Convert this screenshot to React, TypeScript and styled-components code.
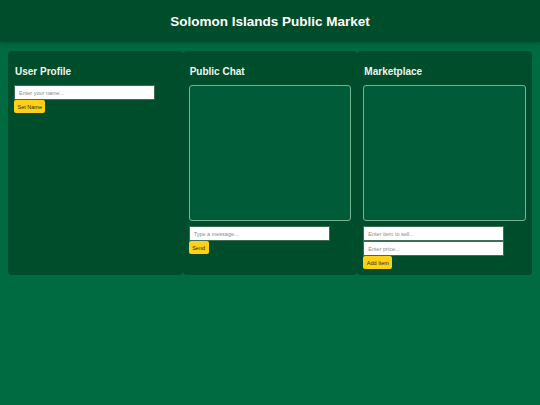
import React, { useState } from 'react';
import styled, { createGlobalStyle } from 'styled-components';

const GlobalStyle = createGlobalStyle`
    html, body {
        margin          : 0;
        padding         : 0;
        background      : #006a40;
        font-family     : "Liberation Sans", Arial, sans-serif;
    }
    `

const Header = styled.header`
    height          : 42px;
    background      : #004d2b;
    color           : #ffffff;
    display         : flex;
    justify-content : center;
    align-items     : center;
    box-shadow      : 0 1px 4px rgba(0, 0, 0, 0.25);
    `

const Title = styled.h1`
    margin          : 0;
    font-size       : 13.5px;
    font-weight     : bold;
    `

const Main = styled.main`
    display         : flex;
    padding         : 9px 8px;
    `

const Panel = styled.section`
    flex            : 1;
    background      : #004d2b;
    border-radius   : 4px;
    padding         : 0 6px 6px;
    display         : flex;
    flex-direction  : column;
    align-items     : flex-start;
    `

const PanelTitle = styled.h2`
    margin          : 15px 0 7px 1px;
    font-size       : 10px;
    line-height     : 12px;
    font-weight     : bold;
    color           : #eef7ef;
    `

const Feed = styled.div`
    align-self      : stretch;
    height          : 134px;
    background      : #005c38;
    border          : 1px solid #79b293;
    border-radius   : 3px;
    margin-bottom   : 5px;
    `

const Input = styled.input`
    box-sizing      : border-box;
    width           : 141px;
    height          : 15px;
    margin          : 0;
    padding         : 0 4px;
    border          : 1px solid #3f6e55;
    background      : #ffffff;
    font-family     : "Liberation Sans", Arial, sans-serif;
    font-size       : 5.5px;
    outline         : none;
    &::placeholder {
        color       : #8a8a8a;
    }
    `

const Button = styled.button`
    height          : 13px;
    margin          : 0;
    padding         : 0 3.5px;
    border          : none;
    border-radius   : 2px;
    background      : #fcd116;
    color           : #1d2b1d;
    font-family     : "Liberation Sans", Arial, sans-serif;
    font-size       : 5.5px;
    cursor          : pointer;
    `

const App = () => {
    const [name, setName] = useState('');
    const [message, setMessage] = useState('');
    const [item, setItem] = useState('');
    const [price, setPrice] = useState('');

    return (
        <>
            <GlobalStyle />
            <Header>
                <Title>Solomon Islands Public Market</Title>
            </Header>
            <Main>
                <Panel>
                    <PanelTitle>User Profile</PanelTitle>
                    <Input placeholder="Enter your name..." value={name} onChange={e => setName(e.target.value)} />
                    <Button>Set Name</Button>
                </Panel>
                <Panel>
                    <PanelTitle>Public Chat</PanelTitle>
                    <Feed />
                    <Input placeholder="Type a message..." value={message} onChange={e => setMessage(e.target.value)} />
                    <Button>Send</Button>
                </Panel>
                <Panel>
                    <PanelTitle>Marketplace</PanelTitle>
                    <Feed />
                    <Input placeholder="Enter item to sell..." value={item} onChange={e => setItem(e.target.value)} />
                    <Input placeholder="Enter price..." value={price} onChange={e => setPrice(e.target.value)} />
                    <Button>Add Item</Button>
                </Panel>
            </Main>
        </>
    )
}

export default App;
